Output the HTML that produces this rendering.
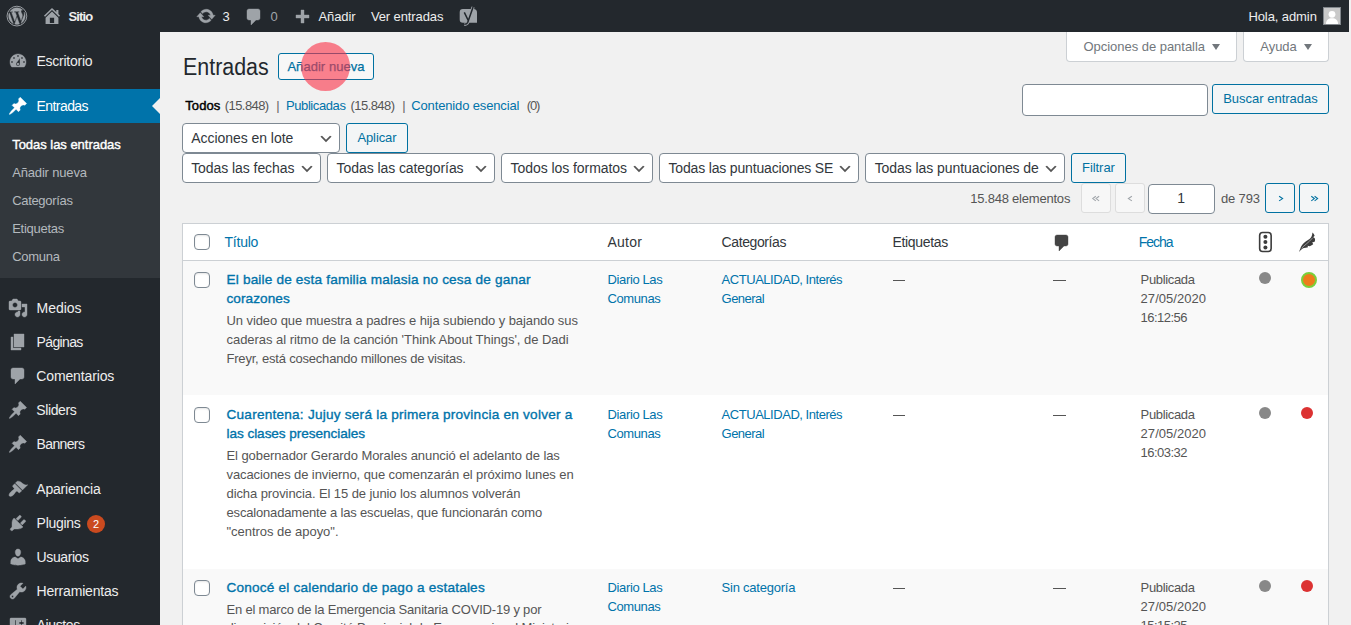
<!DOCTYPE html>
<html lang="es">
<head>
<meta charset="utf-8">
<title>Entradas</title>
<style>
*{box-sizing:border-box;margin:0;padding:0}
html,body{width:1351px;height:625px;overflow:hidden;background:#f1f1f1;font-family:"Liberation Sans",sans-serif;font-size:13px;color:#444}
.a{position:absolute}
.x{position:absolute;white-space:pre;z-index:10}
.btn{position:absolute;border:1px solid #0071a1;border-radius:3px;background:#f3f5f6}
.sel{position:absolute;border:1px solid #7e8993;border-radius:4px;background:#fff;height:30px}
.sel svg{position:absolute;right:5px;top:6.6px;width:16px;height:16px}
.cb{position:absolute;width:16px;height:16px;border:1px solid #7e8993;border-radius:4px;background:#fff;box-shadow:inset 0 1px 2px rgba(0,0,0,.1)}
.dot{position:absolute;width:12px;height:12px;border-radius:50%}
.ic{position:absolute;z-index:10}
.tri{position:absolute;width:0;height:0;border-left:4.5px solid transparent;border-right:4.5px solid transparent;border-top:6px solid #72777c}
</style>
</head>
<body>
<!-- ADMIN BAR + MENU backgrounds -->
<div class="a" style="left:0;top:0;width:1349px;height:32px;background:#23282d"></div>
<div class="a" style="left:0;top:32px;width:160px;height:593px;background:#23282d"></div>
<div class="a" style="left:0;top:89px;width:160px;height:34px;background:#0073aa"></div>
<div class="a" style="left:0;top:123px;width:160px;height:155px;background:#32373c"></div>
<div class="a" style="left:152px;top:98px;width:0;height:0;border:8px solid transparent;border-right-color:#f1f1f1;border-left-width:0"></div>
<!-- avatar -->
<div class="a" style="left:1323px;top:7px;width:18px;height:18px;background:#c9c9c9;border:1px solid #82878c;overflow:hidden">
<svg width="16" height="16" viewBox="0 0 16 16" style="position:absolute;left:0;top:0"><circle cx="8" cy="6.3" r="3.4" fill="#fff"/><path d="M2 16c0-3.800 2.300-5.700 6-5.700s6 1.900 6 5.700z" fill="#fff"/></svg>
</div>
<!-- plugin badge -->
<div class="a" style="left:87px;top:515px;width:18px;height:18px;border-radius:9px;background:#ca4a1f"></div>
<div class="x" style="left:93px;top:517.5px;font-size:11px;line-height:13px;color:#fff">2</div>

<svg class="ic" style="left:196px;top:6px" width="20" height="20" viewBox="0 0 20 20"><path fill="#9ea3a8" stroke="#9ea3a8" stroke-width="0.4" stroke-linejoin="round" d="M10.2 3.28c3.53 0 6.43 2.61 6.92 6h2.08l-3.5 4-3.5-4h2.32c-.45-1.97-2.21-3.45-4.32-3.45-1.45 0-2.73.71-3.54 1.78L4.95 5.66C6.23 4.2 8.11 3.28 10.2 3.28zm-.4 13.44c-3.52 0-6.43-2.61-6.92-6H.8l3.5-4c1.17 1.33 2.33 2.67 3.5 4H5.48c.45 1.97 2.21 3.45 4.32 3.45 1.45 0 2.73-.71 3.54-1.78l1.71 1.95c-1.28 1.46-3.15 2.38-5.25 2.38z"/></svg>
<svg class="ic" style="left:244px;top:7px" width="20" height="20" viewBox="0 0 20 20"><path fill="#9ea3a8" stroke="#9ea3a8" stroke-width="0.4" stroke-linejoin="round" d="M5 2h9c1.1 0 2 .9 2 2v7c0 1.1-.9 2-2 2h-2l-5 5v-5H5c-1.1 0-2-.9-2-2V4c0-1.1.9-2 2-2z"/></svg>
<svg class="ic" style="left:292px;top:8px" width="20" height="20" viewBox="0 0 20 20"><path fill="#9ea3a8" stroke="#9ea3a8" stroke-width="0.4" stroke-linejoin="round" d="M17 7v3h-5v5H9v-5H4V7h5V2h3v5h5z"/></svg>
<svg class="ic" style="left:8px;top:51px" width="20" height="20" viewBox="0 0 20 20"><path fill="#9ea3a8" stroke="#9ea3a8" stroke-width="0.4" stroke-linejoin="round" d="M3.76 16h12.48c1.1-1.37 1.76-3.11 1.76-5 0-4.42-3.58-8-8-8s-8 3.58-8 8c0 1.89.66 3.63 1.76 5zM10 4c.55 0 1 .45 1 1s-.45 1-1 1-1-.45-1-1 .45-1 1-1zM6 6c.55 0 1 .45 1 1s-.45 1-1 1-1-.45-1-1 .45-1 1-1zm8 0c.55 0 1 .45 1 1s-.45 1-1 1-1-.45-1-1 .45-1 1-1zm-5.37 5.55L12 7v6c0 1.1-.9 2-2 2s-2-.9-2-2c0-.57.24-1.08.63-1.45zM4 10c.55 0 1 .45 1 1s-.45 1-1 1-1-.45-1-1 .45-1 1-1zm12 0c.55 0 1 .45 1 1s-.45 1-1 1-1-.45-1-1 .45-1 1-1zm-5 3c0-.55-.45-1-1-1s-1 .45-1 1 .45 1 1 1 1-.45 1-1z"/></svg>
<svg class="ic" style="left:8px;top:96px" width="20" height="20" viewBox="0 0 20 20"><path fill="#fff" stroke="#fff" stroke-width="0.4" stroke-linejoin="round" d="M10.44 3.02l1.82-1.82 6.36 6.35-1.83 1.82c-1.05-.68-2.48-.57-3.41.36l-.75.75c-.92.93-1.04 2.35-.35 3.41l-1.83 1.82-2.41-2.41-2.8 2.79c-.42.42-3.38 2.71-3.8 2.29s1.86-3.39 2.28-3.81l2.79-2.79L4.1 9.36l1.83-1.82c1.05.69 2.48.57 3.4-.36l.75-.75c.93-.92 1.05-2.35.36-3.41z"/></svg>
<svg class="ic" style="left:8px;top:298px" width="20" height="20" viewBox="0 0 20 20"><path fill="#9ea3a8" stroke="#9ea3a8" stroke-width="0.4" stroke-linejoin="round" d="M13 11V4c0-.55-.45-1-1-1h-1.67L9 1H5L3.67 3H2c-.55 0-1 .45-1 1v7c0 .55.45 1 1 1h10c.55 0 1-.45 1-1zM7 4.5c1.38 0 2.5 1.12 2.5 2.5S8.38 9.5 7 9.5 4.5 8.38 4.5 7 5.62 4.5 7 4.5zM14 6h5v10.5c0 1.38-1.12 2.5-2.5 2.5S14 17.88 14 16.5s1.12-2.5 2.5-2.5c.17 0 .34.02.5.05V9h-3V6zm-4 8.05V13h2v3.5c0 1.38-1.12 2.5-2.5 2.5S7 17.88 7 16.5 8.12 14 9.5 14c.17 0 .34.02.5.05z"/></svg>
<svg class="ic" style="left:8px;top:332px" width="20" height="20" viewBox="0 0 20 20"><path fill="#9ea3a8" stroke="#9ea3a8" stroke-width="0.4" stroke-linejoin="round" d="M6 15V2h10v13H6zm-1 1h8v2H3V5h2v11z"/></svg>
<svg class="ic" style="left:8px;top:366px" width="20" height="20" viewBox="0 0 20 20"><path fill="#9ea3a8" stroke="#9ea3a8" stroke-width="0.4" stroke-linejoin="round" d="M5 2h9c1.1 0 2 .9 2 2v7c0 1.1-.9 2-2 2h-2l-5 5v-5H5c-1.1 0-2-.9-2-2V4c0-1.1.9-2 2-2z"/></svg>
<svg class="ic" style="left:8px;top:400px" width="20" height="20" viewBox="0 0 20 20"><path fill="#9ea3a8" stroke="#9ea3a8" stroke-width="0.4" stroke-linejoin="round" d="M10.44 3.02l1.82-1.82 6.36 6.35-1.83 1.82c-1.05-.68-2.48-.57-3.41.36l-.75.75c-.92.93-1.04 2.35-.35 3.41l-1.83 1.82-2.41-2.41-2.8 2.79c-.42.42-3.38 2.71-3.8 2.29s1.86-3.39 2.28-3.81l2.79-2.79L4.1 9.36l1.83-1.82c1.05.69 2.48.57 3.4-.36l.75-.75c.93-.92 1.05-2.35.36-3.41z"/></svg>
<svg class="ic" style="left:8px;top:434px" width="20" height="20" viewBox="0 0 20 20"><path fill="#9ea3a8" stroke="#9ea3a8" stroke-width="0.4" stroke-linejoin="round" d="M10.44 3.02l1.82-1.82 6.36 6.35-1.83 1.82c-1.05-.68-2.48-.57-3.41.36l-.75.75c-.92.93-1.04 2.35-.35 3.41l-1.83 1.82-2.41-2.41-2.8 2.79c-.42.42-3.38 2.71-3.8 2.29s1.86-3.39 2.28-3.81l2.79-2.79L4.1 9.36l1.83-1.82c1.05.69 2.48.57 3.4-.36l.75-.75c.93-.92 1.05-2.35.36-3.41z"/></svg>
<svg class="ic" style="left:8px;top:479px" width="20" height="20" viewBox="0 0 20 20"><path fill="#9ea3a8" stroke="#9ea3a8" stroke-width="0.4" stroke-linejoin="round" d="M14.48 11.06L7.41 3.99l1.5-1.5c.5-.56 2.3-.47 3.51.32 1.21.8 1.43 1.28 2.91 2.1 1.18.64 2.45 1.26 4.45.85zm-.71.71L6.7 4.7 4.93 6.47c-.39.39-.39 1.02 0 1.41l1.06 1.06c.39.39.39 1.03 0 1.42-.6.6-1.43 1.11-2.21 1.69-.35.26-.7.53-1.01.84C1.43 14.23.4 16.08 1.4 17.07c.99 1 2.84-.03 4.18-1.36.31-.31.58-.66.85-1.02.57-.78 1.08-1.61 1.69-2.21.39-.39 1.02-.39 1.41 0l1.06 1.06c.39.39 1.02.39 1.41 0z"/></svg>
<svg class="ic" style="left:8px;top:513px" width="20" height="20" viewBox="0 0 20 20"><path fill="#9ea3a8" stroke="#9ea3a8" stroke-width="0.4" stroke-linejoin="round" d="M13.11 4.36L9.87 7.6 8 5.73l3.24-3.24c.35-.34 1.05-.2 1.56.32.52.51.66 1.21.31 1.55zm-8 1.77l.91-1.12 9.01 9.01-1.19.84c-.71.71-2.63 1.16-3.82 1.16H6.14L4.9 17.26c-.59.59-1.54.59-2.12 0-.59-.58-.59-1.53 0-2.120l1.24-1.240v-3.880c0-1.130.4-3.190 1.090-3.890zm7.260 3.970l3.240-3.240c.340-.350 1.040-.210 1.550.310.520.510.660 1.210.310 1.550l-3.240 3.250z"/></svg>
<svg class="ic" style="left:8px;top:547px" width="20" height="20" viewBox="0 0 20 20"><path fill="#9ea3a8" stroke="#9ea3a8" stroke-width="0.4" stroke-linejoin="round" d="M10 9.25c-2.27 0-2.73-3.44-2.73-3.44C7 4.02 7.82 2 9.97 2c2.16 0 2.98 2.02 2.71 3.81 0 0-.41 3.44-2.68 3.44zm0 2.57L12.720 10c2.390 0 4.520 2.330 4.520 4.530v2.490s-3.650 1.130-7.240 1.130c-3.650 0-7.240-1.130-7.240-1.130v-2.490c0-2.250 1.940-4.480 4.470-4.480z"/></svg>
<svg class="ic" style="left:8px;top:581px" width="20" height="20" viewBox="0 0 20 20"><path fill="#9ea3a8" stroke="#9ea3a8" stroke-width="0.4" stroke-linejoin="round" d="M16.68 9.77c-1.34 1.34-3.3 1.67-4.95.99l-5.41 6.520c-.99.990-2.590.990-3.580 0s-.990-2.590 0-3.570l6.520-5.420c-.680-1.650-.350-3.610.990-4.950 1.280-1.280 3.120-1.620 4.720-1.060l-2.890 2.890 2.820 2.820 2.860-2.870c.530 1.580.180 3.390-1.080 4.650zM3.810 16.210c.4.390 1.040.390 1.430 0 .4-.4.4-1.040 0-1.430-.390-.4-1.030-.4-1.430 0-.390.390-.390 1.030 0 1.430z"/></svg>
<svg class="ic" style="left:8px;top:615px" width="20" height="20" viewBox="0 0 20 20"><path fill="#9ea3a8" stroke="#9ea3a8" stroke-width="0.4" stroke-linejoin="round" d="M18 16V4c0-.55-.45-1-1-1H3c-.55 0-1 .45-1 1v12c0 .55.45 1 1 1h14c.55 0 1-.45 1-1zM8 11h1c.55 0 1 .45 1 1s-.45 1-1 1H8v1.500c0 .280-.220.500-.500.500s-.500-.220-.500-.500V13H6c-.550 0-1-.450-1-1s.450-1 1-1h1V5.500c0-.280.220-.500.500-.500s.500.220.500.500V11zm5-2h-1c-.550 0-1-.450-1-1s.450-1 1-1h1V5.500c0-.280.220-.500.500-.500s.500.220.500.500V7h1c.550 0 1 .450 1 1s-.450 1-1 1h-1v5.500c0 .280-.220.500-.500.500s-.500-.220-.500-.500V9z"/></svg>
<svg class="ic" style="left:1052px;top:233px" width="20" height="20" viewBox="0 0 20 20"><path fill="#444" stroke="#444" stroke-width="0.4" stroke-linejoin="round" d="M5 2h9c1.1 0 2 .9 2 2v7c0 1.1-.9 2-2 2h-2l-5 5v-5H5c-1.1 0-2-.9-2-2V4c0-1.1.9-2 2-2z"/></svg>
<svg class="ic" style="left:41px;top:4px" width="23" height="23" viewBox="0 0 23 23"><path fill="#9ea3a8" transform="translate(0.3 1.28) scale(1.07 1.04)" d="M16 8.5l1.53 1.53-1.06 1.06L10 4.62l-6.47 6.47-1.06-1.06L10 2.5l4 4v-2h2v4zm-6-2.46l6 5.99V18H4v-5.970zM12 17v-5H8v5h4z"/></svg>
<svg class="ic" style="left:6px;top:5px" width="23" height="23" viewBox="0 0 23 23"><g transform="translate(0.55 0.75) scale(1.035)"><circle cx="10" cy="10" r="9.55" fill="none" stroke="#9ea3a8" stroke-width="0.9"/><path fill="#9ea3a8" stroke="#9ea3a8" stroke-width="0.45" stroke-linejoin="round" transform="translate(10 10) scale(.9) translate(-10 -10)" d="M7.78 15.37L4.37 6.22c.55-.02 1.17-.08 1.17-.08.5-.06.44-1.13-.06-1.11 0 0-1.45.11-2.37.11-.18 0-.37 0-.58-.01C4.12 2.69 6.87 1.11 10 1.11c2.33 0 4.45.87 6.05 2.34-.68-.11-1.65.39-1.65 1.58 0 .74.45 1.36.9 2.1.35.61.55 1.36.55 2.46 0 1.49-1.4 5-1.4 5l-3.03-8.37c.54-.02.82-.17.82-.17.5-.05.44-1.25-.06-1.22 0 0-1.44.12-2.38.12-.87 0-2.33-.12-2.33-.12-.5-.03-.56 1.2-.06 1.22l.92.08 1.26 3.41zM17.41 10c.24-.64.74-1.87.43-4.25.7 1.29 1.05 2.71 1.05 4.25 0 3.29-1.73 6.24-4.4 7.78.97-2.59 1.94-5.2 2.92-7.78zM6.1 18.09C3.12 16.65 1.11 13.53 1.11 10c0-1.3.23-2.48.72-3.59C3.25 10.3 4.67 14.2 6.1 18.09zm4.03-6.63l2.58 6.98c-.86.29-1.76.45-2.71.45-.79 0-1.57-.11-2.29-.33.81-2.38 1.62-4.74 2.42-7.1z"/></g></svg>
<svg class="ic" style="left:456px;top:2px" width="26" height="28" viewBox="456 2 26 28">
<path d="M462.9 9h10.6a3.5 3.500 0 0 1 3.500 3.500v10.300h-14.100a3.200 3.200 0 0 1-3.200-3.200v-7.400a3.200 3.200 0 0 1 3.200-3.200z" fill="#9ea3a8"/>
<path d="M473.100 7L467.700 22.400Q467 24.200 464.200 24.300" fill="none" stroke="#9ea3a8" stroke-width="3.200"/>
<path d="M473.100 7L467.700 22.400Q467 24.200 464.300 24.300M464.300 12.300L468.200 20.300" fill="none" stroke="#23282d" stroke-width="1.500"/>
</svg>
<svg class="ic" style="left:1258px;top:231px" width="15" height="22" viewBox="0 0 15 22">
<rect x="1.650" y="1.550" width="11.500" height="18.900" rx="3" fill="none" stroke="#3c3c3c" stroke-width="1.600"/>
<circle cx="7.400" cy="5.700" r="2" fill="#3c3c3c"/><circle cx="7.400" cy="11" r="2" fill="#3c3c3c"/><circle cx="7.400" cy="16.400" r="2" fill="#3c3c3c"/>
</svg>
<svg class="ic" style="left:1298px;top:231px" width="19" height="22" viewBox="0 0 19 22">
<path d="M1 20.900C1.500 19.600 1.900 18.900 2.200 18.100 2.500 17 2.800 16.100 3.300 15.200 4 13.900 4.900 12.800 5.900 11.900 7 10.900 8.400 10.100 9.600 9.300 10.700 8.600 11.800 8 12.600 7.100 13.400 6.200 13.800 5.200 14.050 4.100 14.250 3.200 14.300 2.400 14.400 1.400 15.500 2.300 16.300 3.500 16.650 4.850L15.200 6.300C15.900 6.600 16.600 7.100 17 7.800 17.200 8.800 17.050 9.900 16.650 10.800L14.100 11.500C14.600 12 15 12.600 15.200 13.350 14.300 14.200 13.100 14.800 11.800 15.200L9.600 14.800 10 16.300C8.700 16.700 7.300 16.800 5.900 17.050 5.100 17.300 4.300 17.700 3.700 18.200 2.800 19 1.900 20 1 20.900z" fill="#3c3c3c"/>
<path d="M3.600 17.300C6.300 14.200 10.500 11.800 14.700 6.800" fill="none" stroke="#fff" stroke-width="0.650" opacity=".7"/>
</svg>


<!-- screen meta tabs -->
<div class="a" style="left:1066px;top:32px;width:171px;height:30px;background:#fff;border:1px solid #ccd0d4;border-top:none;border-radius:0 0 4px 4px"></div>
<div class="a" style="left:1243px;top:32px;width:86px;height:30px;background:#fff;border:1px solid #ccd0d4;border-top:none;border-radius:0 0 4px 4px"></div>
<div class="tri" style="left:1212px;top:44px"></div>
<div class="tri" style="left:1303.5px;top:44px"></div>

<!-- page title action -->
<div class="btn" style="left:278px;top:53px;width:96px;height:27px;background:#f7f7f7"></div>

<!-- search -->
<div class="a" style="left:1022px;top:84px;width:186px;height:32px;background:#fff;border:1px solid #7e8993;border-radius:4px"></div>
<div class="btn" style="left:1212px;top:84px;width:117px;height:30px"></div>

<!-- bulk -->
<div class="sel" style="left:182px;top:123px;width:158px"><svg viewBox="0 0 20 20"><path d="M5 6l5 5 5-5 2 1-7 7-7-7 2-1z" fill="#555"/></svg></div>
<div class="btn" style="left:346px;top:123px;width:62px;height:30px"></div>

<!-- filters -->
<div class="sel" style="left:182px;top:153px;width:139px"><svg viewBox="0 0 20 20"><path d="M5 6l5 5 5-5 2 1-7 7-7-7 2-1z" fill="#555"/></svg></div>
<div class="sel" style="left:327px;top:153px;width:168px"><svg viewBox="0 0 20 20"><path d="M5 6l5 5 5-5 2 1-7 7-7-7 2-1z" fill="#555"/></svg></div>
<div class="sel" style="left:501px;top:153px;width:152px"><svg viewBox="0 0 20 20"><path d="M5 6l5 5 5-5 2 1-7 7-7-7 2-1z" fill="#555"/></svg></div>
<div class="sel" style="left:659px;top:153px;width:200px"><svg viewBox="0 0 20 20"><path d="M5 6l5 5 5-5 2 1-7 7-7-7 2-1z" fill="#555"/></svg></div>
<div class="sel" style="left:865px;top:153px;width:200px"><svg viewBox="0 0 20 20"><path d="M5 6l5 5 5-5 2 1-7 7-7-7 2-1z" fill="#555"/></svg></div>
<div class="btn" style="left:1071px;top:153px;width:55px;height:30px"></div>

<!-- pagination -->
<div class="a" style="left:1081px;top:183px;width:30px;height:30px;border:1px solid #ddd;border-radius:3px;background:#f7f7f7"></div>
<div class="a" style="left:1115px;top:183px;width:30px;height:30px;border:1px solid #ddd;border-radius:3px;background:#f7f7f7"></div>
<div class="a" style="left:1148px;top:184px;width:67px;height:30px;border:1px solid #7e8993;border-radius:4px;background:#fff"></div>
<div class="btn" style="left:1265px;top:183px;width:30px;height:30px"></div>
<div class="btn" style="left:1299px;top:183px;width:30px;height:30px"></div>
<svg class="ic" style="left:1081px;top:183px" width="30" height="30" viewBox="0 0 30 30"><path d="M14.8 13.3L11.8 15.6 14.8 17.9M18.1 13.3L15.1 15.6 18.1 17.9" fill="none" stroke="#a0a5aa" stroke-width="1.1"/></svg>
<svg class="ic" style="left:1115px;top:183px" width="30" height="30" viewBox="0 0 30 30"><path d="M16.9 13.3L13.4 15.6 16.9 17.9" fill="none" stroke="#a0a5aa" stroke-width="1.1"/></svg>
<svg class="ic" style="left:1265px;top:183px" width="30" height="30" viewBox="0 0 30 30"><path d="M14.1 13.3L17.6 15.6 14.1 17.9" fill="none" stroke="#0071a1" stroke-width="1.1"/></svg>
<svg class="ic" style="left:1299px;top:183px" width="30" height="30" viewBox="0 0 30 30"><path d="M12.3 13.3L15.3 15.6 12.3 17.9M15.600 13.3L18.6 15.6 15.600 17.9" fill="none" stroke="#0071a1" stroke-width="1.1"/></svg>

<!-- table -->
<div class="a" style="left:182px;top:223px;width:1147px;height:420px;background:#fff;border:1px solid #ccd0d4;box-shadow:0 1px 1px rgba(0,0,0,.04)"></div>
<div class="a" style="left:183px;top:260px;width:1145px;height:1px;background:#ccd0d4"></div>
<div class="a" style="left:183px;top:261px;width:1145px;height:134px;background:#f9f9f9"></div>
<div class="a" style="left:183px;top:569px;width:1145px;height:60px;background:#f9f9f9"></div>

<div class="cb" style="left:194px;top:234px"></div>
<div class="cb" style="left:194px;top:272px"></div>
<div class="cb" style="left:194px;top:407px"></div>
<div class="cb" style="left:194px;top:580px"></div>

<!-- dashes -->
<div class="a" style="left:893px;top:279.5px;width:12px;height:1px;background:#555"></div>
<div class="a" style="left:1053px;top:279.5px;width:13px;height:1px;background:#555"></div>
<div class="a" style="left:893px;top:414.5px;width:12px;height:1px;background:#555"></div>
<div class="a" style="left:1053px;top:414.5px;width:13px;height:1px;background:#555"></div>
<div class="a" style="left:893px;top:587.5px;width:12px;height:1px;background:#555"></div>
<div class="a" style="left:1053px;top:587.5px;width:13px;height:1px;background:#555"></div>

<!-- score dots -->
<div class="dot" style="left:1259px;top:272px;background:#888"></div>
<div class="dot" style="left:1301px;top:272px;width:16px;height:16px;background:#ee7c1b;border:2px solid #7ad03a"></div>
<div class="dot" style="left:1259px;top:407px;background:#888"></div>
<div class="dot" style="left:1301px;top:407px;background:#dc3232"></div>
<div class="dot" style="left:1259px;top:580px;background:#888"></div>
<div class="dot" style="left:1301px;top:580px;background:#dc3232"></div>

<div class="x" style="left:68.6px;top:8.0px;font-size:13px;line-height:18px;color:#eee;font-weight:bold;letter-spacing:-0.918px;">Sitio</div>
<div class="x" style="left:222.4px;top:8.0px;font-size:13px;line-height:18px;color:#eee;">3</div>
<div class="x" style="left:270.5px;top:8.0px;font-size:13px;line-height:18px;color:#a0a5aa;">0</div>
<div class="x" style="left:318.4px;top:8.0px;font-size:13px;line-height:18px;color:#eee;letter-spacing:-0.056px;">Añadir</div>
<div class="x" style="left:370.9px;top:8.0px;font-size:13px;line-height:18px;color:#eee;letter-spacing:-0.111px;">Ver entradas</div>
<div class="x" style="left:1248.4px;top:8.0px;font-size:13px;line-height:18px;color:#eee;letter-spacing:-0.087px;">Hola, admin</div>
<div class="x" style="left:36.5px;top:51.3px;font-size:14px;line-height:20px;color:#eee;letter-spacing:-0.251px;">Escritorio</div>
<div class="x" style="left:36.5px;top:96.3px;font-size:14px;line-height:20px;color:#fff;letter-spacing:-0.564px;">Entradas</div>
<div class="x" style="left:36.6px;top:298.3px;font-size:14px;line-height:20px;color:#eee;letter-spacing:-0.028px;">Medios</div>
<div class="x" style="left:36.6px;top:332.3px;font-size:14px;line-height:20px;color:#eee;letter-spacing:-0.649px;">Páginas</div>
<div class="x" style="left:36.3px;top:366.3px;font-size:14px;line-height:20px;color:#eee;letter-spacing:-0.138px;">Comentarios</div>
<div class="x" style="left:36.3px;top:400.3px;font-size:14px;line-height:20px;color:#eee;letter-spacing:-0.399px;">Sliders</div>
<div class="x" style="left:36.6px;top:434.3px;font-size:14px;line-height:20px;color:#eee;letter-spacing:-0.643px;">Banners</div>
<div class="x" style="left:36.3px;top:479.3px;font-size:14px;line-height:20px;color:#eee;letter-spacing:-0.195px;">Apariencia</div>
<div class="x" style="left:36.6px;top:513.3px;font-size:14px;line-height:20px;color:#eee;letter-spacing:-0.287px;">Plugins</div>
<div class="x" style="left:36.6px;top:547.3px;font-size:14px;line-height:20px;color:#eee;letter-spacing:-0.407px;">Usuarios</div>
<div class="x" style="left:36.6px;top:581.3px;font-size:14px;line-height:20px;color:#eee;letter-spacing:-0.185px;">Herramientas</div>
<div class="x" style="left:36.6px;top:615.3px;font-size:14px;line-height:20px;color:#eee;letter-spacing:-0.370px;">Ajustes</div>
<div class="x" style="left:12.2px;top:135.7px;font-size:13px;line-height:18px;color:#fff;letter-spacing:-0.031px;-webkit-text-stroke:0.4px #fff;">Todas las entradas</div>
<div class="x" style="left:12.2px;top:163.7px;font-size:13px;line-height:18px;color:#b4b9be;letter-spacing:-0.166px;">Añadir nueva</div>
<div class="x" style="left:12.2px;top:191.7px;font-size:13px;line-height:18px;color:#b4b9be;letter-spacing:-0.322px;">Categorías</div>
<div class="x" style="left:12.2px;top:219.7px;font-size:13px;line-height:18px;color:#b4b9be;letter-spacing:-0.275px;">Etiquetas</div>
<div class="x" style="left:12.2px;top:247.7px;font-size:13px;line-height:18px;color:#b4b9be;letter-spacing:-0.288px;">Comuna</div>
<div class="x" style="left:1083.4px;top:37.7px;font-size:13px;line-height:18px;color:#72777c;letter-spacing:-0.024px;">Opciones de pantalla</div>
<div class="x" style="left:1260.3px;top:37.7px;font-size:13px;line-height:18px;color:#72777c;letter-spacing:-0.035px;">Ayuda</div>
<div class="x" style="left:182.6px;top:50.9px;font-size:23px;line-height:32px;color:#23282d;transform:scaleX(0.9309);transform-origin:0 0;">Entradas</div>
<div class="x" style="left:287.4px;top:58.1px;font-size:13px;line-height:18px;color:#0071a1;letter-spacing:0.043px;-webkit-text-stroke:0.25px #0071a1;">Añadir nueva</div>
<div class="x" style="left:185.3px;top:96.7px;font-size:13px;line-height:18px;color:#000;letter-spacing:0.074px;-webkit-text-stroke:0.45px #000;">Todos</div>
<div class="x" style="left:224.8px;top:96.7px;font-size:13px;line-height:18px;color:#555;letter-spacing:-0.575px;">(15.848)</div>
<div class="x" style="left:276.2px;top:96.7px;font-size:13px;line-height:18px;color:#666;">|</div>
<div class="x" style="left:286.0px;top:96.7px;font-size:13px;line-height:18px;color:#0073aa;letter-spacing:-0.412px;">Publicadas</div>
<div class="x" style="left:350.6px;top:96.7px;font-size:13px;line-height:18px;color:#555;letter-spacing:-0.575px;">(15.848)</div>
<div class="x" style="left:402.3px;top:96.7px;font-size:13px;line-height:18px;color:#666;">|</div>
<div class="x" style="left:411.3px;top:96.7px;font-size:13px;line-height:18px;color:#0073aa;letter-spacing:-0.146px;">Contenido esencial</div>
<div class="x" style="left:526.8px;top:96.7px;font-size:13px;line-height:18px;color:#555;letter-spacing:-1.200px;">(0)</div>
<div class="x" style="left:1223.2px;top:90.1px;font-size:13px;line-height:18px;color:#0071a1;letter-spacing:-0.005px;">Buscar entradas</div>
<div class="x" style="left:357.4px;top:129.1px;font-size:13px;line-height:18px;color:#0071a1;letter-spacing:-0.092px;">Aplicar</div>
<div class="x" style="left:1082.0px;top:159.1px;font-size:13px;line-height:18px;color:#0071a1;letter-spacing:-0.053px;">Filtrar</div>
<div class="x" style="left:191.2px;top:128.1px;font-size:14px;line-height:20px;color:#32373c;letter-spacing:-0.042px;">Acciones en lote</div>
<div class="x" style="left:191.2px;top:158.1px;font-size:14px;line-height:20px;color:#32373c;letter-spacing:-0.066px;">Todas las fechas</div>
<div class="x" style="left:336.6px;top:158.1px;font-size:14px;line-height:20px;color:#32373c;letter-spacing:-0.074px;">Todas las categorías</div>
<div class="x" style="left:510.5px;top:158.1px;font-size:14px;line-height:20px;color:#32373c;letter-spacing:-0.053px;">Todos los formatos</div>
<div class="x" style="left:668.5px;top:158.1px;font-size:14px;line-height:20px;color:#32373c;letter-spacing:-0.170px;">Todas las puntuaciones SE</div>
<div class="x" style="left:874.7px;top:158.1px;font-size:14px;line-height:20px;color:#32373c;letter-spacing:-0.067px;">Todas las puntuaciones de</div>
<div class="x" style="left:970.2px;top:190.1px;font-size:13px;line-height:18px;color:#555;letter-spacing:-0.211px;">15.848 elementos</div>
<div class="x" style="left:1177.3px;top:188.4px;font-size:14px;line-height:20px;color:#32373c;">1</div>
<div class="x" style="left:1221.0px;top:190.1px;font-size:13px;line-height:18px;color:#555;letter-spacing:-0.153px;">de 793</div>
<div class="x" style="left:224.5px;top:232.1px;font-size:14px;line-height:20px;color:#0073aa;letter-spacing:-0.223px;">Título</div>
<div class="x" style="left:607.6px;top:232.1px;font-size:14px;line-height:20px;color:#32373c;letter-spacing:0.183px;">Autor</div>
<div class="x" style="left:721.6px;top:232.1px;font-size:14px;line-height:20px;color:#32373c;letter-spacing:-0.398px;">Categorías</div>
<div class="x" style="left:892.4px;top:232.1px;font-size:14px;line-height:20px;color:#32373c;letter-spacing:-0.322px;">Etiquetas</div>
<div class="x" style="left:1138.8px;top:232.1px;font-size:14px;line-height:20px;color:#0073aa;letter-spacing:-1.055px;">Fecha</div>
<div class="x" style="left:226.5px;top:270.0px;font-size:13.6px;line-height:19px;color:#0073aa;letter-spacing:0.176px;-webkit-text-stroke:0.35px #0073aa;">El baile de esta familia malasia no cesa de ganar</div>
<div class="x" style="left:226.5px;top:289.0px;font-size:13.6px;line-height:19px;color:#0073aa;letter-spacing:0.060px;-webkit-text-stroke:0.35px #0073aa;">corazones</div>
<div class="x" style="left:226.5px;top:311.5px;font-size:13px;line-height:18px;color:#555;letter-spacing:-0.084px;">Un video que muestra a padres e hija subiendo y bajando sus</div>
<div class="x" style="left:226.5px;top:330.5px;font-size:13px;line-height:18px;color:#555;letter-spacing:-0.039px;">caderas al ritmo de la canción 'Think About Things', de Dadi</div>
<div class="x" style="left:226.5px;top:349.5px;font-size:13px;line-height:18px;color:#555;letter-spacing:-0.199px;">Freyr, está cosechando millones de visitas.</div>
<div class="x" style="left:607.6px;top:270.6px;font-size:13px;line-height:18px;color:#0073aa;letter-spacing:-0.381px;">Diario Las</div>
<div class="x" style="left:607.6px;top:289.6px;font-size:13px;line-height:18px;color:#0073aa;letter-spacing:-0.423px;">Comunas</div>
<div class="x" style="left:721.6px;top:270.6px;font-size:13px;line-height:18px;color:#0073aa;letter-spacing:-0.463px;">ACTUALIDAD, Interés</div>
<div class="x" style="left:721.6px;top:289.6px;font-size:13px;line-height:18px;color:#0073aa;letter-spacing:-0.542px;">General</div>
<div class="x" style="left:1140.6px;top:270.6px;font-size:13px;line-height:18px;color:#555;letter-spacing:-0.339px;">Publicada</div>
<div class="x" style="left:1140.6px;top:289.6px;font-size:13px;line-height:18px;color:#555;letter-spacing:0.047px;">27/05/2020</div>
<div class="x" style="left:1140.6px;top:308.6px;font-size:13px;line-height:18px;color:#555;letter-spacing:-0.530px;">16:12:56</div>
<div class="x" style="left:226.5px;top:405.0px;font-size:13.6px;line-height:19px;color:#0073aa;letter-spacing:0.233px;-webkit-text-stroke:0.35px #0073aa;">Cuarentena: Jujuy será la primera provincia en volver a</div>
<div class="x" style="left:226.5px;top:424.0px;font-size:13.6px;line-height:19px;color:#0073aa;letter-spacing:-0.058px;-webkit-text-stroke:0.35px #0073aa;">las clases presenciales</div>
<div class="x" style="left:226.5px;top:446.5px;font-size:13px;line-height:18px;color:#555;letter-spacing:-0.075px;">El gobernador Gerardo Morales anunció el adelanto de las</div>
<div class="x" style="left:226.5px;top:465.5px;font-size:13px;line-height:18px;color:#555;letter-spacing:-0.097px;">vacaciones de invierno, que comenzarán el próximo lunes en</div>
<div class="x" style="left:226.5px;top:484.5px;font-size:13px;line-height:18px;color:#555;letter-spacing:-0.089px;">dicha provincia. El 15 de junio los alumnos volverán</div>
<div class="x" style="left:226.5px;top:503.5px;font-size:13px;line-height:18px;color:#555;letter-spacing:-0.173px;">escalonadamente a las escuelas, que funcionarán como</div>
<div class="x" style="left:226.5px;top:522.5px;font-size:13px;line-height:18px;color:#555;letter-spacing:-0.032px;">"centros de apoyo".</div>
<div class="x" style="left:607.6px;top:405.6px;font-size:13px;line-height:18px;color:#0073aa;letter-spacing:-0.381px;">Diario Las</div>
<div class="x" style="left:607.6px;top:424.6px;font-size:13px;line-height:18px;color:#0073aa;letter-spacing:-0.423px;">Comunas</div>
<div class="x" style="left:721.6px;top:405.6px;font-size:13px;line-height:18px;color:#0073aa;letter-spacing:-0.463px;">ACTUALIDAD, Interés</div>
<div class="x" style="left:721.6px;top:424.6px;font-size:13px;line-height:18px;color:#0073aa;letter-spacing:-0.542px;">General</div>
<div class="x" style="left:1140.6px;top:405.6px;font-size:13px;line-height:18px;color:#555;letter-spacing:-0.339px;">Publicada</div>
<div class="x" style="left:1140.6px;top:424.6px;font-size:13px;line-height:18px;color:#555;letter-spacing:0.047px;">27/05/2020</div>
<div class="x" style="left:1140.6px;top:443.6px;font-size:13px;line-height:18px;color:#555;letter-spacing:-0.530px;">16:03:32</div>
<div class="x" style="left:226.5px;top:578.0px;font-size:13.6px;line-height:19px;color:#0073aa;letter-spacing:0.206px;-webkit-text-stroke:0.35px #0073aa;">Conocé el calendario de pago a estatales</div>
<div class="x" style="left:226.5px;top:600.7px;font-size:13px;line-height:18px;color:#555;letter-spacing:-0.195px;">En el marco de la Emergencia Sanitaria COVID-19 y por</div>
<div class="x" style="left:226.5px;top:619.1px;font-size:13px;line-height:18px;color:#555;letter-spacing:-0.134px;">disposición del Comité Provincial de Emergencia, el Ministerio</div>
<div class="x" style="left:607.6px;top:578.6px;font-size:13px;line-height:18px;color:#0073aa;letter-spacing:-0.381px;">Diario Las</div>
<div class="x" style="left:607.6px;top:597.6px;font-size:13px;line-height:18px;color:#0073aa;letter-spacing:-0.423px;">Comunas</div>
<div class="x" style="left:721.6px;top:578.6px;font-size:13px;line-height:18px;color:#0073aa;letter-spacing:-0.226px;">Sin categoría</div>
<div class="x" style="left:1140.6px;top:578.6px;font-size:13px;line-height:18px;color:#555;letter-spacing:-0.339px;">Publicada</div>
<div class="x" style="left:1140.6px;top:597.6px;font-size:13px;line-height:18px;color:#555;letter-spacing:0.047px;">27/05/2020</div>
<div class="x" style="left:1140.6px;top:616.6px;font-size:13px;line-height:18px;color:#555;letter-spacing:-0.530px;">15:15:25</div>

<!-- click highlight -->
<div class="a" style="left:301px;top:42px;width:49px;height:49px;border-radius:50%;background:rgba(252,48,70,.6);z-index:20"></div>
</body>
</html>
